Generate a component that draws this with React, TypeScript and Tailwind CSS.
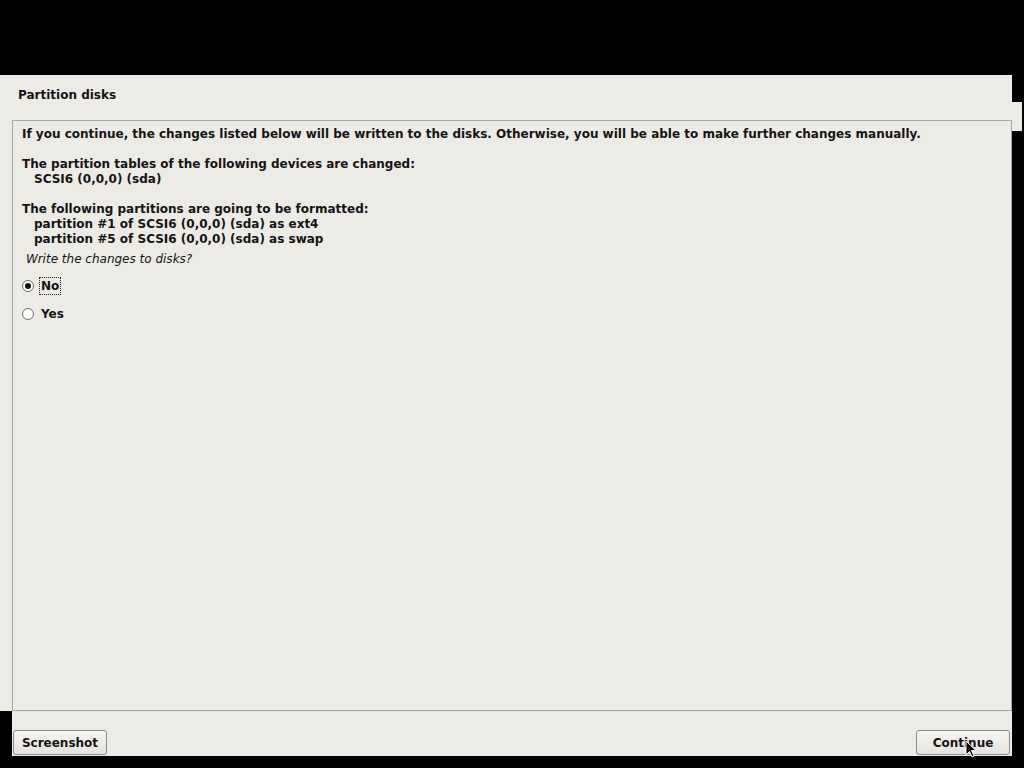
import React from "react";

export default function App() {
  const font = { fontFamily: '"DejaVu Sans", "Liberation Sans", sans-serif' };
  return (
    <div className="relative w-[1024px] h-[768px] bg-black overflow-hidden text-[12px] text-[#141414]" style={font}>
      <div className="h-[75px]" />
      <div className="w-[1012px] h-[636px] bg-[#edebe6] flex flex-col">
        <div className="h-[45px] pl-[18px] pt-[13px] font-bold leading-[15px]">Partition disks</div>
        <div className="ml-[12px] flex-1 border border-[#a9a8a4] pl-[9px] pt-[6px] leading-[15px] font-bold">
          <div>If you continue, the changes listed below will be written to the disks. Otherwise, you will be able to make further changes manually.</div>
          <div className="h-[15px]" />
          <div>The partition tables of the following devices are changed:</div>
          <div className="pl-[12px]">SCSI6 (0,0,0) (sda)</div>
          <div className="h-[15px]" />
          <div>The following partitions are going to be formatted:</div>
          <div className="pl-[12px]">partition #1 of SCSI6 (0,0,0) (sda) as ext4</div>
          <div className="pl-[12px]">partition #5 of SCSI6 (0,0,0) (sda) as swap</div>
          <div className="pl-[4px] pt-[5px] italic font-normal">Write the changes to disks?</div>
          <div className="flex items-center h-[20px] mt-[9px]">
            <span className="w-[12px] h-[12px] rounded-full border border-[#6e6d6a] bg-white flex items-center justify-center">
              <span className="w-[6px] h-[6px] rounded-full bg-[#141414]" />
            </span>
            <span className="ml-[5px] px-[1px] border border-dotted border-[#222] leading-[16px]">No</span>
          </div>
          <div className="flex items-center h-[20px] mt-[8px]">
            <span className="w-[12px] h-[12px] rounded-full border border-[#6e6d6a] bg-white" />
            <span className="ml-[6px] px-[1px] leading-[16px]">Yes</span>
          </div>
        </div>
      </div>
      <div className="ml-[12px] w-[1000px] h-[45px] bg-[#edebe6] flex items-start justify-between pt-[19px] pl-[1px] pr-[2px]">
        <button className="h-[25px] w-[94px] rounded-[3px] border border-[#8c8b87] bg-gradient-to-b from-[#f7f6f3] to-[#e4e2dc] font-bold text-[12px] leading-[22px]">Screenshot</button>
        <button className="h-[25px] w-[94px] rounded-[3px] border border-[#8c8b87] bg-gradient-to-b from-[#f7f6f3] to-[#e4e2dc] font-bold text-[12px] leading-[22px]">Continue</button>
      </div>
      <div className="absolute left-[1012px] top-[102px] w-[10px] h-[29px] bg-[#edebe6]" />
      <svg className="absolute left-[965px] top-[740px]" width="12" height="19" viewBox="0 0 12 19">
        <path d="M1 1 L1 15 L4.5 11.5 L7 17 L9 16 L6.5 10.5 L11 10.5 Z" fill="#000" stroke="#fff" strokeWidth="1" />
      </svg>
    </div>
  );
}
